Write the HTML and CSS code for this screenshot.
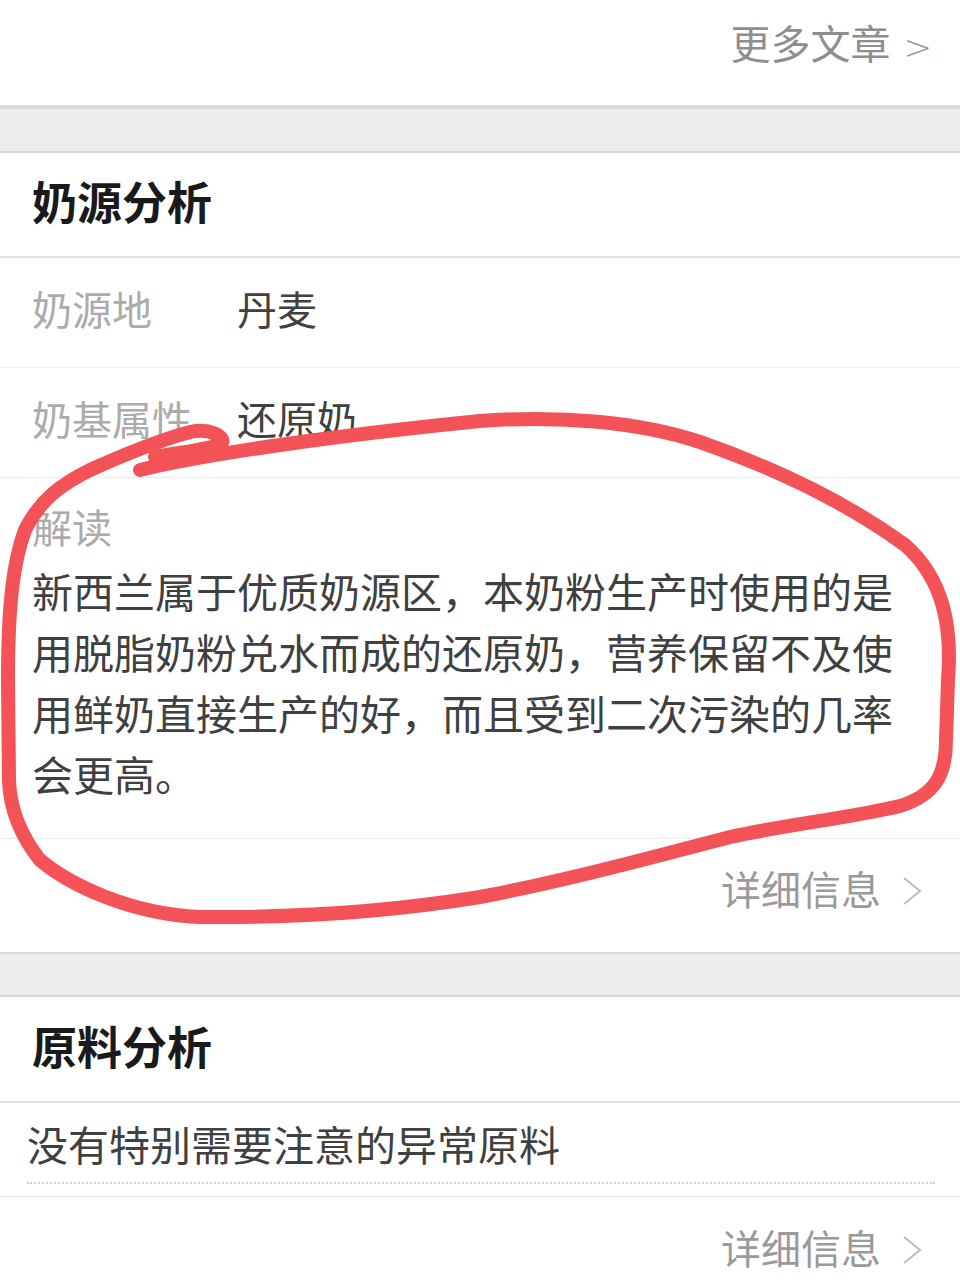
FILE: index.html
```html
<!DOCTYPE html>
<html lang="zh-CN">
<head>
<meta charset="utf-8">
<title>奶源分析</title>
<link rel="stylesheet" href="styles.css">
</head>
<body>
<div class="page">
  <div class="more-bar"><span class="more-link">更多文章 <span class="more-arrow">&gt;</span></span></div>
  <div class="band band-first"></div>

  <section class="card">
    <h2 class="card-title">奶源分析</h2>
    <div class="kv-row"><span class="kv-label">奶源地</span><span class="kv-value">丹麦</span></div>
    <div class="kv-row"><span class="kv-label">奶基属性</span><span class="kv-value">还原奶</span></div>
    <div class="interp">
      <div class="interp-label">解读</div>
      <p class="interp-text">新西兰属于优质奶源区，本奶粉生产时使用的是用脱脂奶粉兑水而成的还原奶，营养保留不及使用鲜奶直接生产的好，而且受到二次污染的几率会更高。</p>
    </div>
    <div class="detail-row">
      <span class="detail-text">详细信息</span>
      <svg class="chev" width="22" height="30" viewBox="0 0 22 30"><path d="M3 2 L19 15 L3 28" fill="none" stroke="#bdbdbd" stroke-width="2"/></svg>
    </div>
  </section>

  <div class="band band-second"></div>

  <section class="card">
    <h2 class="card-title card-title-2">原料分析</h2>
    <div class="note-row">
      <div class="note-text">没有特别需要注意的异常原料</div>
    </div>
    <div class="detail-row detail-row-2">
      <span class="detail-text">详细信息</span>
      <svg class="chev" width="22" height="30" viewBox="0 0 22 30"><path d="M3 2 L19 15 L3 28" fill="none" stroke="#bdbdbd" stroke-width="2"/></svg>
    </div>
  </section>

  <svg class="scribble" width="960" height="1280" viewBox="0 0 960 1280">
    <path d="M140 470 C 200 455 330 436 480 421 C 560 415 640 422 700 442 C 780 470 850 505 905 545 C 945 580 952 630 948 680 L 946 740 C 946 775 935 795 900 806 C 850 818 790 824 730 837 C 650 858 560 882 480 897 C 400 910 300 918 200 917 C 130 914 70 885 40 860 C 20 835 10 810 9 780 L 8 680 C 8 600 14 560 25 530 C 40 500 60 485 90 470 C 130 452 160 440 190 432 C 210 428 225 436 222 443 C 210 450 180 452 155 457" fill="none" stroke="#f35357" stroke-width="14" stroke-linecap="round" stroke-linejoin="round"/>
  </svg>
</div>
</body>
</html>
```

FILE: styles.css
```css
html, body {
  margin: 0;
  padding: 0;
  background: #ffffff;
}
body {
  font-family: "Noto Sans CJK SC", "Noto Sans", sans-serif;
  color: #444444;
}
.page {
  position: relative;
  width: 960px;
  height: 1280px;
  overflow: hidden;
}
.more-bar {
  height: 105px;
  display: flex;
  justify-content: flex-end;
  align-items: flex-start;
  padding: 15px 28px 0 0;
  box-sizing: border-box;
}
.more-link {
  font-size: 40px;
  line-height: 54px;
  color: #8e8e8e;
}
.more-arrow {
  font-family: "DejaVu Sans", sans-serif;
  font-weight: 300;
  font-size: 34px;
  margin-left: 4px;
}
.band {
  background: #ececec;
  box-sizing: border-box;
}
.band-first {
  height: 48px;
  border-top: 4px solid #dadada;
  border-bottom: 2px solid #d6d6d6;
}
.band-second {
  height: 45px;
  border-top: 2px solid #d8d8d8;
  border-bottom: 2px solid #d8d8d8;
}
.card-title {
  margin: 0;
  height: 105px;
  box-sizing: border-box;
  display: flex;
  align-items: center;
  padding: 0 0 8px 32px;
  font-size: 45px;
  font-weight: 700;
  color: #1a1a1a;
  border-bottom: 2px solid #e2e2e2;
}
.card-title-2 {
  height: 106px;
}
.kv-row {
  height: 110px;
  box-sizing: border-box;
  display: flex;
  align-items: center;
  padding: 0 0 9px 32px;
  border-bottom: 1px solid #ededed;
  font-size: 40px;
}
.kv-label {
  width: 205px;
  color: #ababab;
}
.kv-value {
  color: #404040;
}
.interp {
  padding: 20px 28px 34px 32px;
  border-bottom: 1px solid #ededed;
}
.interp-label {
  font-size: 40px;
  line-height: 56px;
  color: #ababab;
}
.interp-text {
  margin: 6px 0 0 0;
  font-size: 41px;
  line-height: 61px;
  color: #404040;
}
.detail-row {
  height: 113px;
  box-sizing: border-box;
  display: flex;
  justify-content: flex-end;
  align-items: center;
  padding: 0 37px 16px 0;
}
.detail-row-2 {
  height: 100px;
  padding-bottom: 0;
}
.detail-text {
  font-size: 40px;
  color: #9a9a9a;
}
.chev {
  margin-left: 20px;
  margin-top: 6px;
}
.note-row {
  padding: 12px 25px 0 27px;
  border-bottom: 1px solid #e8e8e8;
}
.note-text {
  font-size: 41px;
  line-height: 56px;
  color: #404040;
  padding-bottom: 11px;
  border-bottom: 2px dotted #d0d0d0;
  margin-bottom: 12px;
}
.scribble {
  position: absolute;
  left: 0;
  top: 0;
  pointer-events: none;
}
```
